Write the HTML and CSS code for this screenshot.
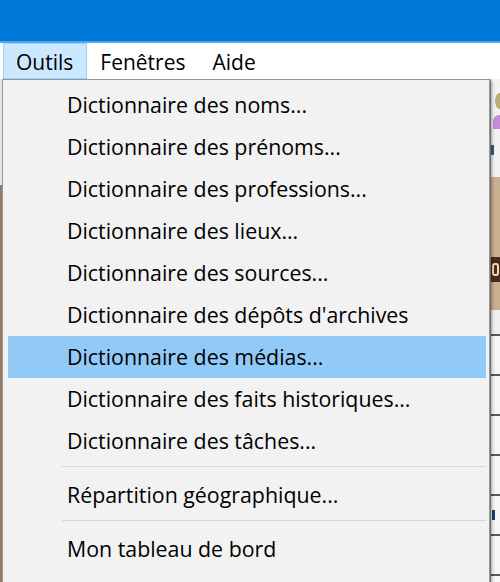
FILE: index.html
```html
<!DOCTYPE html>
<html lang="fr">
<head>
<meta charset="utf-8">
<link rel="stylesheet" href="styles.css">
</head>
<body>
<div class="titlebar"></div>
<nav class="menubar">
  <span class="mb-item active">Outils</span>
  <span class="mb-item">Fenêtres</span>
  <span class="mb-item">Aide</span>
</nav>
<div class="stage">
  <div class="app">
    <div class="app-left">
      <div class="al-top"></div>
      <div class="al-brown"></div>
    </div>
    <div class="app-main"></div>
    <div class="app-right">
      <div class="ar-top">
        <div class="avatar-head"></div>
        <div class="avatar-body"></div>
        <div class="ar-dot"></div>
      </div>
      <div class="ar-tan"></div>
      <div class="ar-dark"></div>
      <div class="ar-tan short"></div>
      <div class="ar-light"></div>
      <div class="ar-row"></div>
      <div class="ar-row"></div>
      <div class="ar-row"></div>
      <div class="ar-row"></div>
      <div class="ar-row"><span class="ar-mark"></span></div>
      <div class="ar-row"></div>
      <div class="ar-row"></div>
    </div>
  </div>
  <ul class="dropdown">
    <li class="item">Dictionnaire des noms...</li>
    <li class="item">Dictionnaire des prénoms...</li>
    <li class="item">Dictionnaire des professions...</li>
    <li class="item">Dictionnaire des lieux...</li>
    <li class="item">Dictionnaire des sources...</li>
    <li class="item">Dictionnaire des dépôts d'archives</li>
    <li class="item hover">Dictionnaire des médias...</li>
    <li class="item">Dictionnaire des faits historiques...</li>
    <li class="item">Dictionnaire des tâches...</li>
    <li class="sep"></li>
    <li class="item">Répartition géographique...</li>
    <li class="sep"></li>
    <li class="item">Mon tableau de bord</li>
    <li class="item">Suivi des recherches...</li>
  </ul>
</div>
</body>
</html>
```
FILE: styles.css
```css
html, body {
  margin: 0;
  padding: 0;
  width: 500px;
  height: 582px;
  overflow: hidden;
  background: #ffffff;
  font-family: "Open Sans", "Noto Sans", "DejaVu Sans", sans-serif;
  color: #000;
}

.titlebar {
  height: 41px;
  background: #0078d7;
  border-bottom: 2px solid #5aa5e6;
}

.menubar {
  display: flex;
  height: 36px;
  padding-left: 3px;
  background: #ffffff;
  font-size: 21px;
  align-items: stretch;
}

.mb-item {
  display: flex;
  align-items: center;
  padding: 2px 13px 0 12px;
  border: 1px solid transparent;
  box-sizing: border-box;
}

.mb-item.active {
  background: #cce8ff;
  border-color: #99d1ff;
}

.stage {
  position: relative;
  height: 503px;
  overflow: hidden;
}

.app {
  display: flex;
  height: 100%;
}

.app-left {
  width: 2px;
  display: flex;
  flex-direction: column;
}

.al-top {
  height: 106px;
  background: #e8e8e8;
}

.al-brown {
  flex: 1;
  background: #9a7a6a;
}

.app-main {
  flex: 1;
  background: #f0f0f0;
}

.app-right {
  width: 9px;
  display: flex;
  flex-direction: column;
  background: #f4f4f4;
  border-left: 2px solid #9a9a9a;
  overflow: hidden;
}

.app-right > div {
  flex: none;
}

.ar-top {
  height: 98px;
  background: #f2f2f2;
}

.avatar-head {
  width: 10px;
  height: 16px;
  margin: 14px 0 0 4px;
  border-radius: 50%;
  background: #b9ad74;
}

.avatar-body {
  width: 12px;
  height: 14px;
  margin: 6px 0 0 2px;
  border-radius: 6px 6px 0 0;
  background: #c68ad8;
}

.ar-dot {
  width: 3px;
  height: 10px;
  margin-top: 16px;
  background: #3a5a7a;
}

.ar-tan {
  height: 80px;
  background: #c8b08f;
}

.ar-tan.short {
  height: 28px;
}

.ar-dark {
  height: 25px;
  background: #4b2c1c;
  position: relative;
}

.ar-dark::after {
  content: "";
  position: absolute;
  left: 1px;
  top: 6px;
  width: 7px;
  height: 13px;
  border-radius: 3px;
  border: 2px solid #f0dcb0;
  box-sizing: border-box;
}

.ar-light {
  height: 24px;
  background: #f0f0f0;
}

.ar-row {
  height: 40px;
  box-sizing: border-box;
  border-top: 2px solid #5a5a5a;
  background: #f6f6f6;
}

.ar-mark {
  display: block;
  width: 3px;
  height: 10px;
  margin: 14px 0 0 1px;
  background: #1a3a7a;
}

.dropdown {
  position: absolute;
  top: 0;
  left: 2px;
  width: 488px;
  height: 520px;
  box-sizing: border-box;
  margin: 0;
  padding: 4px 3px 0 5px;
  list-style: none;
  background: #f2f2f2;
  border: 1px solid #979797;
  border-bottom: none;
  box-shadow: 2px 2px 3px rgba(0, 0, 0, 0.35);
  font-size: 21.35px;
}

.item {
  height: 42px;
  display: flex;
  align-items: center;
  padding-left: 58px;
  padding-bottom: 2px;
  box-sizing: border-box;
  white-space: nowrap;
  border: 1px solid transparent;
}

.item.hover {
  background: #91c9f7;
  border-color: #91c9f7;
}

.sep {
  height: 1px;
  margin: 4px 0 7px 54px;
  background: #d7d7d7;
}
```
